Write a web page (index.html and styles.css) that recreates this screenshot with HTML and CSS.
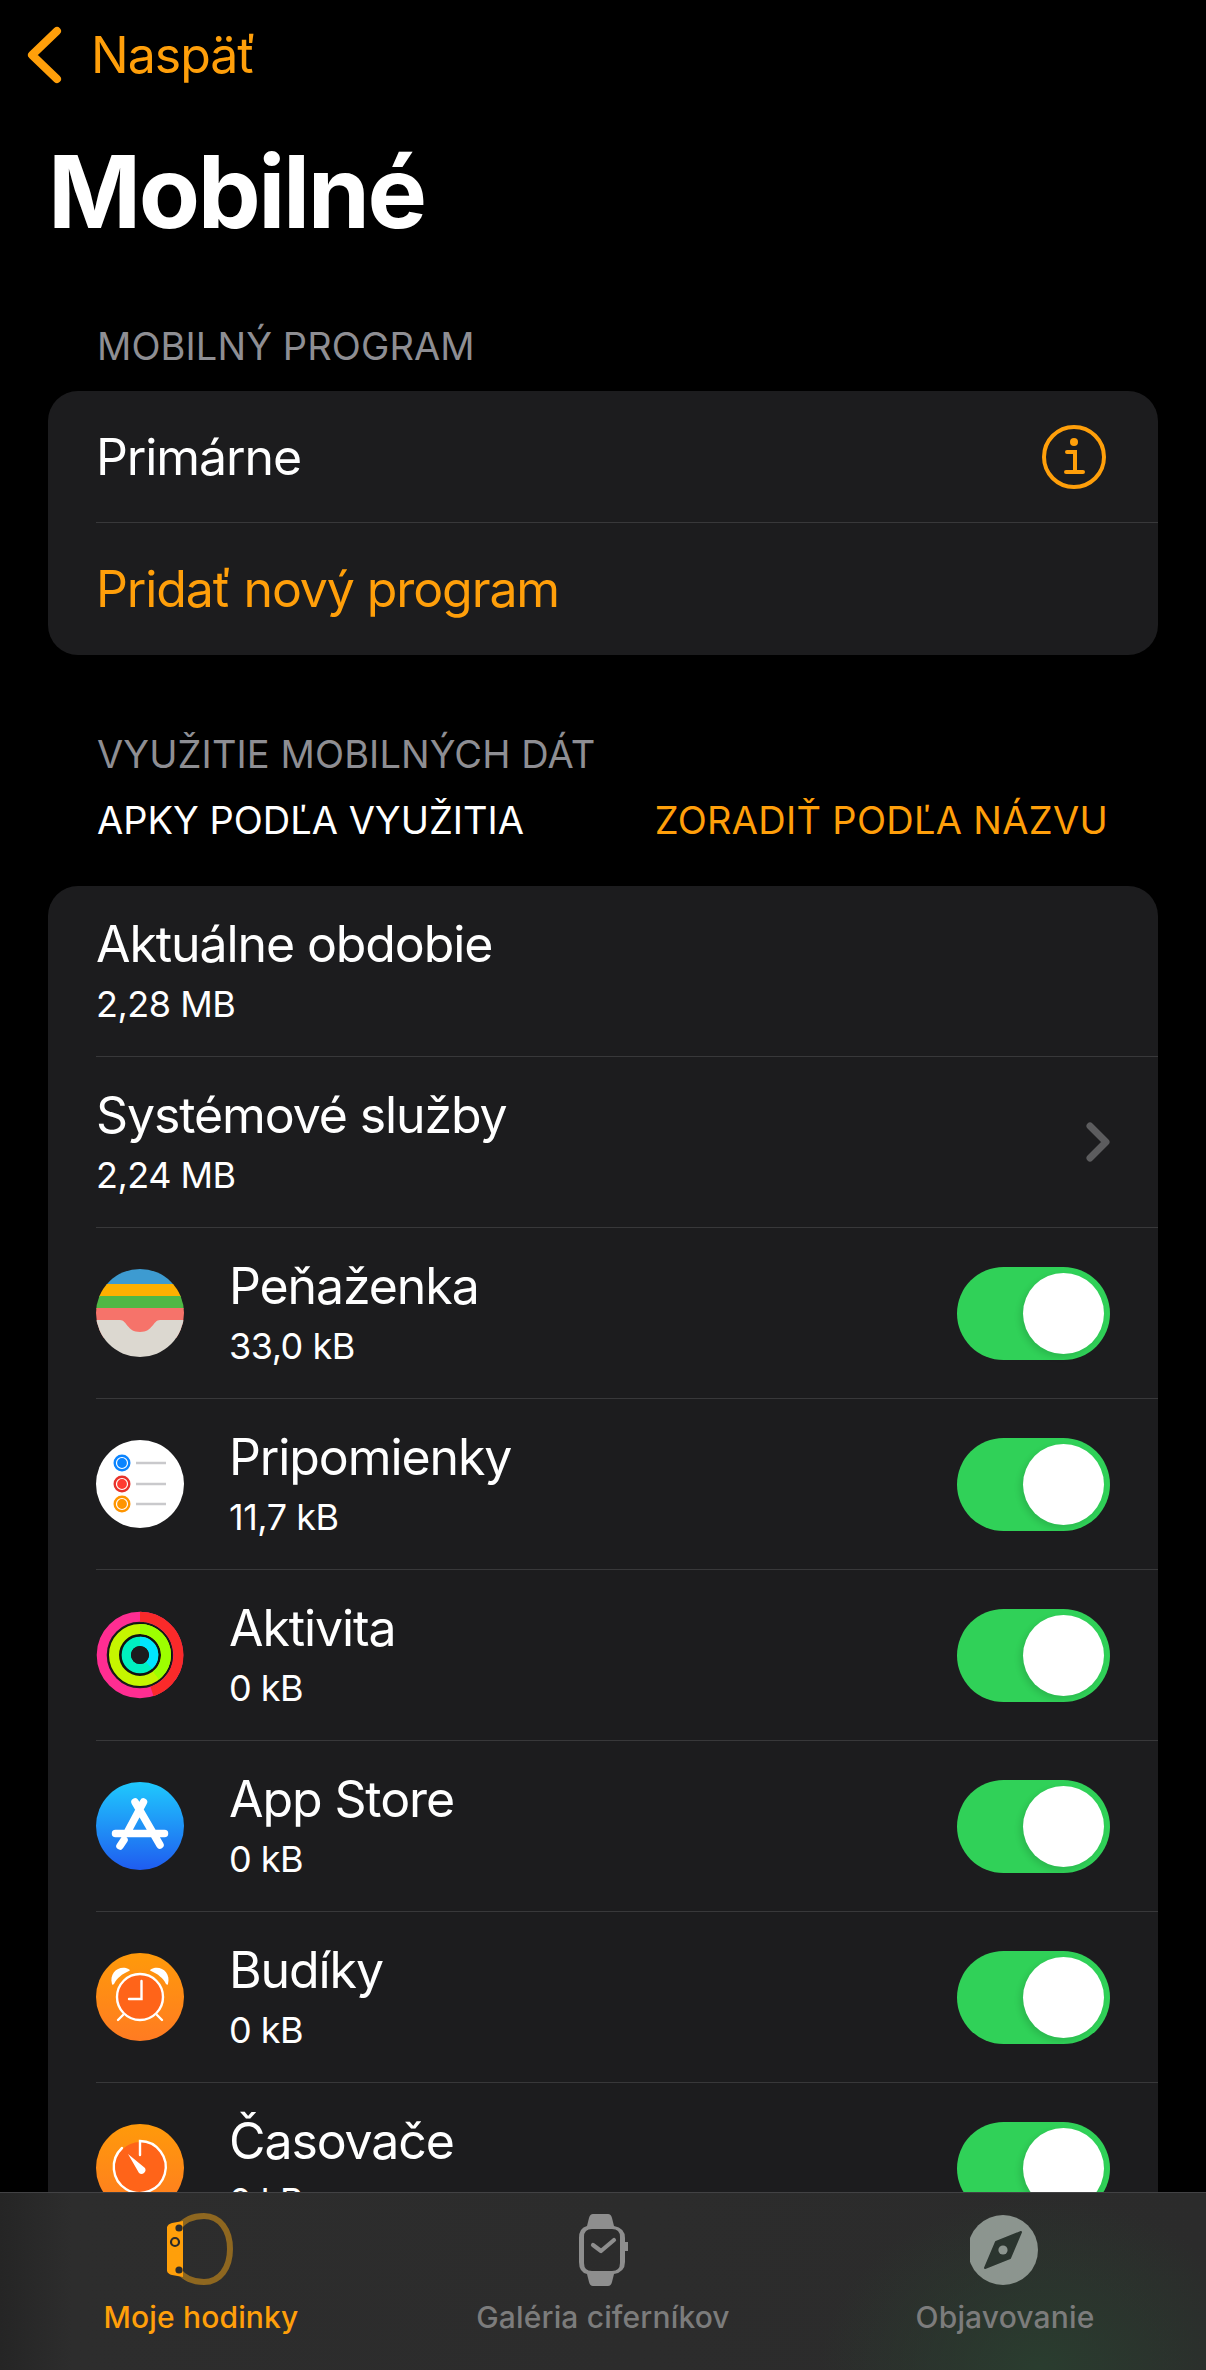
FILE: index.html
```html
<!DOCTYPE html>
<html lang="sk">
<head>
  <meta charset="UTF-8">
  <title>Mobilné</title>
  <link rel="stylesheet" href="styles.css">
</head>
<body>
  <div class="nav">
    <svg class="back-icon" viewBox="0 0 36 58"><path d="M31 5 L6 29 L31 53"/></svg>
    <span class="back-text">Naspäť</span>
  </div>
  <h1 class="title">Mobilné</h1>

  <div class="section-head">MOBILNÝ PROGRAM</div>
  <div class="card">
    <div class="row row-plain">
      <div class="row-inner">
        <span class="row-title">Primárne</span>
        <svg class="info-icon" viewBox="0 0 64 64">
          <circle cx="32" cy="32" r="30" fill="none" stroke="#ff9f0a" stroke-width="4"/>
          <circle cx="32" cy="17" r="4" fill="#ff9f0a"/>
          <path d="M25 27 H33 V47 M24 47 H41" fill="none" stroke="#ff9f0a" stroke-width="4" stroke-linecap="round"/>
        </svg>
      </div>
    </div>
    <div class="row row-plain">
      <div class="row-inner no-line">
        <span class="row-title orange">Pridať nový program</span>
      </div>
    </div>
  </div>

  <div class="section-head second">VYUŽITIE MOBILNÝCH DÁT</div>
  <div class="sort-line">
    <span>APKY PODĽA VYUŽITIA</span>
    <span class="orange sort-link">ZORADIŤ PODĽA NÁZVU</span>
  </div>

  <div class="card">
    <div class="row">
      <div class="row-inner">
        <div class="row-text">
          <div class="row-title">Aktuálne obdobie</div>
          <div class="row-sub">2,28 MB</div>
        </div>
      </div>
    </div>
    <div class="row">
      <div class="row-inner">
        <div class="row-text">
          <div class="row-title">Systémové služby</div>
          <div class="row-sub">2,24 MB</div>
        </div>
        <svg class="chevron" viewBox="0 0 24 40"><path d="M4 4 L20 20 L4 36"/></svg>
      </div>
    </div>

    <div class="row">
      <div class="row-inner">
        <svg class="app-icon" viewBox="0 0 88 88">
          <defs><clipPath id="round1"><circle cx="44" cy="44" r="44"/></clipPath></defs>
          <g clip-path="url(#round1)">
            <rect width="88" height="16" fill="#3d9bd1"/>
            <rect y="15" width="88" height="13" fill="#fdb000"/>
            <rect y="27" width="88" height="13" fill="#4fb845"/>
            <rect y="39" width="88" height="30" fill="#f6736a"/>
            <path d="M0 51 H24 C31 51 31 63 44 63 C57 63 57 51 64 51 H88 V88 H0 Z" fill="#dcd8d0"/>
          </g>
        </svg>
        <div class="row-text">
          <div class="row-title">Peňaženka</div>
          <div class="row-sub">33,0 kB</div>
        </div>
        <div class="toggle"><div class="knob"></div></div>
      </div>
    </div>

    <div class="row">
      <div class="row-inner">
        <svg class="app-icon" viewBox="0 0 88 88">
          <circle cx="44" cy="44" r="44" fill="#fff"/>
          <circle cx="26" cy="23" r="7" fill="#0a84ff" stroke="#0a84ff" stroke-width="3"/>
          <circle cx="26" cy="23" r="5.5" fill="#0a84ff" stroke="#fff" stroke-width="1.2"/>
          <circle cx="26" cy="44" r="7" fill="#ff3b30" stroke="#e8322a" stroke-width="3"/>
          <circle cx="26" cy="44" r="5.5" fill="#ff3b30" stroke="#fff" stroke-width="1.2"/>
          <circle cx="26" cy="64" r="7" fill="#ff9500" stroke="#ff9500" stroke-width="3"/>
          <circle cx="26" cy="64" r="5.5" fill="#ff9500" stroke="#fff" stroke-width="1.2"/>
          <path d="M40 23 H70 M40 44 H70 M40 64 H70" stroke="#c9c9cc" stroke-width="2.6"/>
        </svg>
        <div class="row-text">
          <div class="row-title">Pripomienky</div>
          <div class="row-sub">11,7 kB</div>
        </div>
        <div class="toggle"><div class="knob"></div></div>
      </div>
    </div>

    <div class="row">
      <div class="row-inner">
        <svg class="app-icon" viewBox="0 0 88 88" fill="none">
          <circle cx="44" cy="44" r="32" fill="#111"/>
          <circle cx="44" cy="44" r="38.3" stroke="#ff2d92" stroke-width="10"/>
          <path d="M44 5.7 A38.3 38.3 0 0 1 56 80.4" stroke="#fa2a2a" stroke-width="10"/>
          <circle cx="44" cy="44" r="26" stroke="#c6f500" stroke-width="10"/>
          <path d="M44 18 A26 26 0 0 1 60 64.5" stroke="#9dff00" stroke-width="10"/>
          <circle cx="44" cy="44" r="13.7" stroke="#00f0c0" stroke-width="9.3"/>
          <path d="M44 30.3 A13.7 13.7 0 0 1 53 54.3" stroke="#00e5ff" stroke-width="9.3"/>
          <circle cx="44" cy="44" r="9" fill="#1c1c1e"/>
        </svg>
        <div class="row-text">
          <div class="row-title">Aktivita</div>
          <div class="row-sub">0 kB</div>
        </div>
        <div class="toggle"><div class="knob"></div></div>
      </div>
    </div>

    <div class="row">
      <div class="row-inner">
        <svg class="app-icon" viewBox="0 0 88 88">
          <defs>
            <linearGradient id="storeBg" x1="0" y1="0" x2="0" y2="1">
              <stop offset="0" stop-color="#1fc9fd"/>
              <stop offset="1" stop-color="#1f5cf0"/>
            </linearGradient>
          </defs>
          <circle cx="44" cy="44" r="44" fill="url(#storeBg)"/>
          <path d="M47.5 20 L32 49 M39 20 L64 63 M19.5 51.5 H68.5 M28 58 L24 64" fill="none" stroke="#fff" stroke-width="7.5" stroke-linecap="round"/>
        </svg>
        <div class="row-text">
          <div class="row-title">App Store</div>
          <div class="row-sub">0 kB</div>
        </div>
        <div class="toggle"><div class="knob"></div></div>
      </div>
    </div>

    <div class="row">
      <div class="row-inner">
        <svg class="app-icon" viewBox="0 0 88 88">
          <defs>
            <linearGradient id="clockBg" x1="0" y1="0" x2="0" y2="1">
              <stop offset="0" stop-color="#ff9a0a"/>
              <stop offset="1" stop-color="#ff7b22"/>
            </linearGradient>
          </defs>
          <circle cx="44" cy="44" r="44" fill="url(#clockBg)"/>
          <circle cx="44" cy="44" r="23" fill="#ff6419" stroke="#fff" stroke-width="2.4"/>
          <path d="M16 31 C13 20 22 13 30 15 C33 16 35 17 33 18 C26 21 21 25 18 31 C17 32 16 32 16 31 Z" fill="#fff"/>
          <path d="M72 31 C75 20 66 13 58 15 C55 16 53 17 55 18 C62 21 67 25 70 31 C71 32 72 32 72 31 Z" fill="#fff"/>
          <path d="M45.5 28 V46 H33 M27 62 L22 67 M61 62 L66 67" fill="none" stroke="#fff" stroke-width="2.4" stroke-linecap="round"/>
        </svg>
        <div class="row-text">
          <div class="row-title">Budíky</div>
          <div class="row-sub">0 kB</div>
        </div>
        <div class="toggle"><div class="knob"></div></div>
      </div>
    </div>

    <div class="row">
      <div class="row-inner">
        <svg class="app-icon" viewBox="0 0 88 88">
          <circle cx="44" cy="44" r="44" fill="url(#clockBg)"/>
          <circle cx="44" cy="43" r="25" fill="#ff6419"/>
          <path d="M44 31 V17 A26 26 0 1 1 26 24" fill="none" stroke="#fff" stroke-width="2.4" stroke-linecap="round"/>
          <path d="M32 30 L49 44 A4 4 0 0 1 43 49 Z" fill="#fff"/>
        </svg>
        <div class="row-text">
          <div class="row-title">Časovače</div>
          <div class="row-sub">0 kB</div>
        </div>
        <div class="toggle"><div class="knob"></div></div>
      </div>
    </div>
  </div>

  <div class="tabbar">
    <div class="tab active">
      <svg class="tab-icon" viewBox="0 0 70 74">
        <path d="M12 15 C18 7 27 3 38 3 C54 3 64 17 64 36 C64 55 54 69 38 69 C27 69 18 65 12 57" fill="none" stroke="#8e6720" stroke-width="6"/>
        <path d="M1 14 Q2 11 6 10 L17 8 V64 L6 62 Q2 61 1 58 Z" fill="#ff9f0a"/>
        <circle cx="9" cy="29" r="4" fill="none" stroke="#2b2b2b" stroke-width="2.2"/>
        <circle cx="13" cy="15" r="3.6" fill="#2b2b2b"/>
        <circle cx="13" cy="57" r="3.6" fill="#2b2b2b"/>
      </svg>
      <span class="tab-label">Moje hodinky</span>
    </div>
    <div class="tab">
      <svg class="tab-icon" viewBox="0 0 70 74">
        <g transform="translate(2 0)">
          <path fill-rule="evenodd" fill="#8e8e8e" d="M23 1 H38 Q41 1 42 5 L44 13 Q55 15 55 25 V29 H58 V38 H55 V49 Q55 59 44 61 L42 69 Q41 73 38 73 H23 Q20 73 19 69 L17 61 Q9 59 9 49 V25 Q9 15 17 13 L19 5 Q20 1 23 1 Z M22 16 Q14 16 14 24 V50 Q14 58 22 58 H42 Q50 58 50 50 V24 Q50 16 42 16 Z"/>
          <path d="M23 32 L31 38 L44 27" fill="none" stroke="#8e8e8e" stroke-width="4.2" stroke-linecap="round" stroke-linejoin="round"/>
        </g>
      </svg>
      <span class="tab-label">Galéria ciferníkov</span>
    </div>
    <div class="tab">
      <svg class="tab-icon" viewBox="0 0 70 74">
        <circle cx="33" cy="37" r="35" fill="#8c958f"/>
        <path d="M51 19 L40 45 L15 55 L26 29 Z" fill="#2b352f" stroke="#2b352f" stroke-width="2" stroke-linejoin="round"/>
        <circle cx="33" cy="37" r="4.6" fill="#8c958f"/>
      </svg>
      <span class="tab-label">Objavovanie</span>
    </div>
  </div>
</body>
</html>
```

FILE: styles.css
```css
body {
  margin: 0;
  height: 2370px;
  overflow: hidden;
  position: relative;
  background-color: #000;
  color: #fff;
  font-family: "Inter", "Liberation Sans", sans-serif;
}
.orange {
  color: #ff9f0a;
}
.nav {
  display: flex;
  align-items: center;
  gap: 29px;
  padding: 25px 0 0 26px;
  height: 60px;
}
.back-icon {
  width: 36px;
  height: 58px;
  fill: none;
  stroke: #ff9f0a;
  stroke-width: 8;
  stroke-linecap: round;
  stroke-linejoin: round;
}
.back-text {
  font-size: 50px;
  line-height: 60px;
  color: #ff9f0a;
  letter-spacing: -1px;
}
.title {
  margin: 52px 0 0 48px;
  font-size: 100px;
  line-height: 110px;
  font-weight: 700;
  letter-spacing: -2.4px;
}
.section-head {
  margin: 76px 0 22px 97px;
  font-size: 38px;
  line-height: 46px;
  color: #8e8e93;
  letter-spacing: 0.1px;
}
.section-head.second {
  margin-bottom: 20px;
}
.sort-line {
  display: flex;
  justify-content: space-between;
  margin: 0 98px 43px 97px;
  font-size: 38px;
  line-height: 46px;
}
.sort-link {
  letter-spacing: 0.3px;
}
.card {
  margin: 0 48px;
  background-color: #1c1c1e;
  border-radius: 30px;
}
.row {
  padding-left: 48px;
}
.row-inner {
  display: flex;
  align-items: center;
  height: 170px;
  padding-right: 48px;
  border-bottom: 1px solid #38383a;
}
.row-plain .row-inner {
  height: 131px;
  padding-right: 52px;
}
.row-inner.no-line {
  height: 132px;
  border-bottom: none;
}
.row-text {
  flex: 1;
  margin-top: -3px;
}
.app-icon {
  width: 88px;
  height: 88px;
  margin-right: 45px;
  flex-shrink: 0;
}
.row-title {
  flex: 1;
  font-size: 50px;
  line-height: 60px;
  letter-spacing: -1.1px;
}
.row-sub {
  margin-top: 8px;
  font-size: 36px;
  line-height: 44px;
  letter-spacing: -0.5px;
}
.info-icon {
  width: 64px;
  height: 64px;
}
.chevron {
  width: 24px;
  height: 40px;
  fill: none;
  stroke: #5c5c5e;
  stroke-width: 7;
  stroke-linecap: round;
  stroke-linejoin: round;
}
.toggle {
  width: 153px;
  height: 93px;
  padding: 6px;
  box-sizing: border-box;
  display: flex;
  justify-content: flex-end;
  border-radius: 47px;
  background-color: #30d158;
}
.knob {
  width: 81px;
  height: 81px;
  border-radius: 50%;
  background-color: #fff;
  box-shadow: -3px 3px 6px rgba(0, 0, 0, 0.12);
}
.tabbar {
  position: absolute;
  left: 0;
  right: 0;
  bottom: 0;
  height: 177px;
  display: grid;
  grid-template-columns: repeat(3, 1fr);
  border-top: 1px solid #424244;
  background: radial-gradient(ellipse 220px 170px at 1040px 175px, #2a3d2f, rgba(42, 61, 47, 0) 100%),
    linear-gradient(90deg, #252525, #2d2d2d 6%, #2b2b2b);
}
.tab {
  display: flex;
  flex-direction: column;
  align-items: center;
  padding-top: 20px;
}
.tab-icon {
  width: 70px;
  height: 74px;
}
.tab-label {
  margin-top: 12px;
  font-size: 30px;
  line-height: 36px;
  font-weight: 500;
  color: #7c7c7c;
  letter-spacing: 0.15px;
}
.tab.active .tab-label {
  color: #ff9f0a;
}
```
